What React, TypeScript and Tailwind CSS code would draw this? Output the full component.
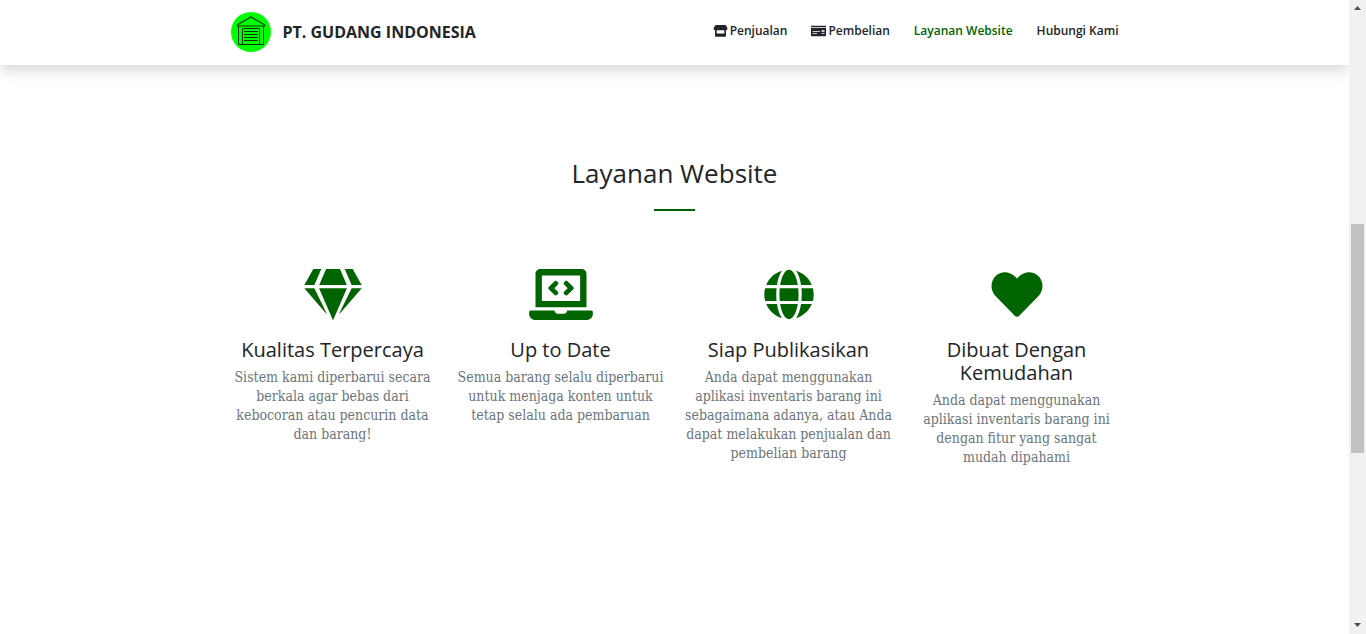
import type { ComponentType } from "react";
import { FaGem, FaGlobe, FaHeart, FaLaptopCode, FaMoneyCheck } from "react-icons/fa";

type Icon = ComponentType<{ className?: string }>;

function StoreIcon({ className }: { className?: string }) {
  return (
    <svg viewBox="0 0 14 12" className={className} fill="currentColor" fillRule="evenodd" aria-hidden="true">
      <path d="M2.400 0h9.200q.5 0 .8.500L13.800 2.800C14.300 4 13.600 5.200 12.400 5.200H1.600C.4 5.200-.3 4 .2 2.800L1.600.5q.3-.5.8-.5z" />
      <path d="M1.500 5h1.700v3.600h7.600V5h1.700v5.800q0 .9-.9.9H2.400q-.9 0-.9-.9z" />
    </svg>
  );
}

const links: { label: string; icon?: Icon; active?: boolean }[] = [
  { label: "Penjualan", icon: StoreIcon },
  { label: "Pembelian", icon: FaMoneyCheck },
  { label: "Layanan Website", active: true },
  { label: "Hubungi Kami" },
];

const services: { title: string; text: string; icon: Icon }[] = [
  {
    title: "Kualitas Terpercaya",
    text: "Sistem kami diperbarui secara\nberkala agar bebas dari\nkebocoran atau pencurin data\ndan barang!",
    icon: FaGem,
  },
  {
    title: "Up to Date",
    text: "Semua barang selalu diperbarui\nuntuk menjaga konten untuk\ntetap selalu ada pembaruan",
    icon: FaLaptopCode,
  },
  {
    title: "Siap Publikasikan",
    text: "Anda dapat menggunakan\naplikasi inventaris barang ini\nsebagaimana adanya, atau Anda\ndapat melakukan penjualan dan\npembelian barang",
    icon: FaGlobe,
  },
  {
    title: "Dibuat Dengan\nKemudahan",
    text: "Anda dapat menggunakan\naplikasi inventaris barang ini\ndengan fitur yang sangat\nmudah dipahami",
    icon: FaHeart,
  },
];

function Logo() {
  return (
    <svg viewBox="0 0 40 40" className="size-10" aria-hidden="true">
      <circle cx="20" cy="20" r="20" fill="#00ff00" />
      <g fill="none" stroke="#053505" strokeWidth="1">
        <path d="M6.500 12.800 20 5l13.500 7.800v1.200h-27z" strokeWidth="1.200" />
        <path d="M7.500 14v18.500h25V14M11.500 32.500v-16h17v16M7.500 32.500h4M28.500 32.500h4" />
        <path d="M13 19.500h14M13 22.500h14M13 25.500h14M13 28.500h14" />
      </g>
    </svg>
  );
}

function Header() {
  return (
    <header className="bg-white shadow-[0_6px_13px_rgba(0,0,0,0.15)]">
      <div className="mx-auto flex h-[65px] max-w-[912px] items-center justify-between px-3 pb-[2px]">
        <a href="#top" className="flex items-center gap-3 text-base font-bold text-[#212529]">
          <Logo />
          PT. GUDANG INDONESIA
        </a>
        <nav className="flex gap-6 pb-[2px] text-xs font-semibold">
          {links.map(({ label, icon: LinkIcon, active }) => (
            <a
              key={label}
              href="#layanan"
              className={`flex items-center gap-[2px] whitespace-nowrap ${active ? "text-[#006400]" : "text-[#212529]"}`}
            >
              {LinkIcon && <LinkIcon className="h-3 w-[15px]" />}
              {label}
            </a>
          ))}
        </nav>
      </div>
    </header>
  );
}

function Scrollbar() {
  return (
    <div className="flex w-[17px] shrink-0 flex-col items-center bg-[#f1f1f1]" aria-hidden="true">
      <svg viewBox="0 0 17 17" className="size-[17px]" fill="#505050">
        <path d="M5 10h7L8.500 6z" />
      </svg>
      <div className="grow-[207]" />
      <div className="w-[13px] grow-[229] bg-[#c1c1c1]" />
      <div className="grow-[164]" />
      <svg viewBox="0 0 17 17" className="size-[17px]" fill="#505050">
        <path d="M5 6h7l-3.500 4z" />
      </svg>
    </div>
  );
}

export default function App() {
  return (
    <div className="flex min-h-screen bg-white font-['Open_Sans','Noto_Sans',sans-serif]">
      <div className="min-w-0 grow">
        <Header />
        <main id="layanan" className="mx-auto max-w-[912px] pt-[93px] text-center">
          <h2 className="text-[26px] leading-[31px] text-[#212529]">Layanan Website</h2>
          <hr className="mx-auto mt-5 w-[41px] border-t-2 border-[#006400]" />
          <div className="mt-[58px] grid grid-cols-2 md:grid-cols-4">
            {services.map(({ title, text, icon: ServiceIcon }) => (
              <section key={title} className="flex flex-col items-center">
                <ServiceIcon className="h-[51px] w-16 text-[#006400]" />
                <h3 className="mt-[18px] whitespace-pre-line text-xl leading-[23px] text-[#212529]">{title}</h3>
                <p className="mt-[7px] whitespace-pre-line font-['DejaVu_Serif_Condensed','DejaVu_Serif',serif] text-sm leading-[19px] text-[#6c757d]">
                  {text}
                </p>
              </section>
            ))}
          </div>
        </main>
      </div>
      <Scrollbar />
    </div>
  );
}
